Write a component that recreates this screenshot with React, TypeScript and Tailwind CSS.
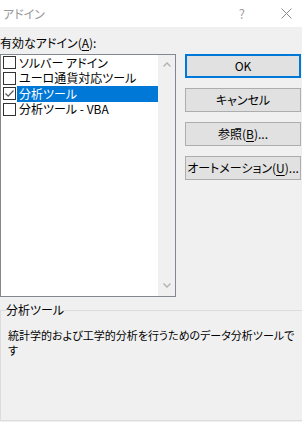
import React from "react";

const font = "font-['Noto_Sans_CJK_JP','Noto_Sans',sans-serif] [font-feature-settings:'palt']";

const items = [
  { label: "ソルバー アドイン", checked: false },
  { label: "ユーロ通貨対応ツール", checked: false },
  { label: "分析ツール", checked: true },
  { label: "分析ツール - VBA", checked: false },
];

function Checkbox({ checked }: { checked: boolean }) {
  return (
    <span className="flex h-[13px] w-[13px] shrink-0 items-center justify-center border border-[#333333] bg-white">
      {checked && (
        <svg width="11" height="11" viewBox="0 0 11 11">
          <path d="M1.5 5.5 L4.2 8.2 L9.5 2.5" fill="none" stroke="#555555" strokeWidth="1.2" />
        </svg>
      )}
    </span>
  );
}

function Button({ children, primary }: { children: React.ReactNode; primary?: boolean }) {
  return (
    <button
      className={`flex h-[24px] w-[116px] items-center justify-center bg-[#e1e1e1] text-[12px] leading-none text-black ${
        primary ? "border-2 border-[#0078d7]" : "border border-[#adadad]"
      }`}
    >
      {children}
    </button>
  );
}

export default function App() {
  return (
    <div className={`h-[422px] w-[302px] overflow-hidden bg-[#f0f0f0] text-black ${font}`}>
      {/* title bar */}
      <div className="flex h-[27px] items-center bg-white pl-[3px] pr-[10px] text-[12px] text-[#999999]">
        <span>アドイン</span>
        <span className="ml-auto mr-[36px] text-[13px] text-[#a0a0a0]">?</span>
        <svg width="11" height="11" viewBox="0 0 11 11">
          <path d="M0.5 0.5 L10.5 10.5 M10.5 0.5 L0.5 10.5" stroke="#8a8a8a" strokeWidth="1" />
        </svg>
      </div>

      <div className="h-[27px] pt-[8px] text-[12px] leading-[16px]">
        有効なアドイン(<span className="underline underline-offset-2">A</span>):
      </div>

      <div className="flex">
        {/* list box */}
        <div className="flex h-[243px] w-[176px] border border-[#828790] bg-white">
          <div className="flex-1">
            {items.map((it, i) => (
              <div key={i} className="flex h-[15.5px] items-center pl-[2px] text-[12px] leading-none">
                <Checkbox checked={it.checked} />
                <span
                  className={`ml-[1px] flex h-full flex-1 items-center pl-[2px] ${
                    it.checked ? "bg-[#0078d7] text-white" : ""
                  }`}
                >
                  {it.label}
                </span>
              </div>
            ))}
          </div>
          <div className="flex w-[17px] flex-col justify-between bg-[#f0f0f0]">
            <div className="flex h-[17px] items-center justify-center pt-[2px]">
              <svg width="8" height="5" viewBox="0 0 8 5">
                <path d="M0.5 4.5 L4 1 L7.5 4.5" fill="none" stroke="#b0b0b0" strokeWidth="1.3" />
              </svg>
            </div>
            <div className="flex h-[17px] items-center justify-center pb-[4px]">
              <svg width="8" height="5" viewBox="0 0 8 5">
                <path d="M0.5 0.5 L4 4 L7.5 0.5" fill="none" stroke="#b0b0b0" strokeWidth="1.3" />
              </svg>
            </div>
          </div>
        </div>

        {/* buttons */}
        <div className="ml-[9px] flex flex-col gap-[10px]">
          <Button primary>OK</Button>
          <Button>キャンセル</Button>
          <Button>
            参照(<span className="underline underline-offset-2">B</span>)...
          </Button>
          <Button>
            オートメーション(<span className="underline underline-offset-2">U</span>)...
          </Button>
        </div>
      </div>

      {/* group box */}
      <fieldset className="mt-[5px] h-[119px] w-[303px] border border-[#dcdcdc]">
        <legend className="ml-[5px] text-[12px] leading-[16px]">分析ツール</legend>
        <p className="whitespace-nowrap pl-[7px] pt-[10px] text-[11px] leading-[15px]">
          統計学的および工学的分析を行うためのデータ分析ツールで
          <br />す
        </p>
      </fieldset>
    </div>
  );
}
